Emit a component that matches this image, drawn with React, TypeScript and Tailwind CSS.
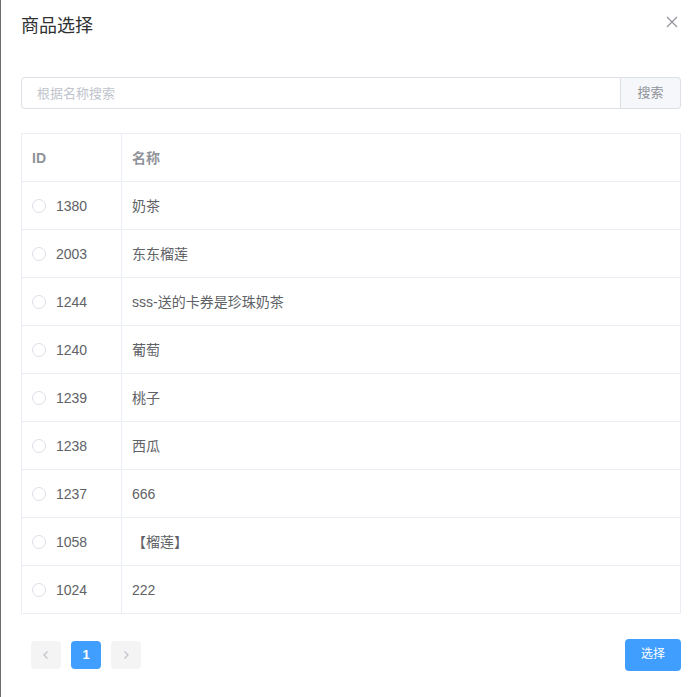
import { useState } from "react";

const goods = [
  { id: 1380, name: "奶茶" },
  { id: 2003, name: "东东榴莲" },
  { id: 1244, name: "sss-送的卡券是珍珠奶茶" },
  { id: 1240, name: "葡萄" },
  { id: 1239, name: "桃子" },
  { id: 1238, name: "西瓜" },
  { id: 1237, name: "666" },
  { id: 1058, name: "【榴莲】" },
  { id: 1024, name: "222" },
];

export default function App() {
  const [picked, setPicked] = useState<number | null>(null);

  return (
    <div
      className="w-[697px] h-[697px] bg-white border-l border-[#6b6b6b] text-[#606266] text-sm overflow-hidden"
      style={{ fontFamily: '"Helvetica Neue", "Liberation Sans", "Noto Sans CJK SC", sans-serif' }}
    >
      <div className="pl-[20px] pr-[18px] pt-[14px] flex items-start justify-between">
        <h1 className="text-[18px] leading-6 text-[#303133]">商品选择</h1>
        <button className="mt-[1px] text-[#909399]">
          <svg width="14" height="14" viewBox="0 0 14 14" fill="none" stroke="currentColor" strokeWidth="1.2">
            <path d="M2 2L12 12M12 2L2 12" />
          </svg>
        </button>
      </div>

      <div className="pl-[20px] pt-[39px] w-[680px]">
        <div className="flex h-8 w-[660px]">
          <input
            className="flex-1 h-8 border border-[#dcdfe6] rounded-l px-[15px] text-[13px] outline-none placeholder:text-[#c0c4cc]"
            placeholder="根据名称搜索"
          />
          <button className="w-[60px] h-8 bg-[#f5f7fa] border border-l-0 border-[#dcdfe6] rounded-r text-[13px] text-[#909399]">
            搜索
          </button>
        </div>

        <table className="mt-[24px] w-[660px] border border-[#ebeef5] border-collapse">
          <thead>
            <tr className="h-[48px] text-left text-[#909399]">
              <th className="w-[100px] border border-[#ebeef5] px-[10px] font-bold">ID</th>
              <th className="border border-[#ebeef5] px-[10px] font-bold">名称</th>
            </tr>
          </thead>
          <tbody>
            {goods.map((g) => (
              <tr key={g.id} className="h-[48px]">
                <td className="border border-[#ebeef5] px-[10px]">
                  <label className="flex items-center gap-[10px] cursor-pointer" onClick={() => setPicked(g.id)}>
                    <span
                      className={
                        picked === g.id
                          ? "w-[14px] h-[14px] rounded-full border-4 border-[#409eff] bg-white"
                          : "w-[14px] h-[14px] rounded-full border border-[#dcdfe6] bg-white"
                      }
                    />
                    <span>{g.id}</span>
                  </label>
                </td>
                <td className="border border-[#ebeef5] px-[10px]">{g.name}</td>
              </tr>
            ))}
          </tbody>
        </table>

        <div className="mt-[25px] w-[660px] flex items-center justify-between">
          <div className="flex items-center gap-[10px] pl-[10px]">
            <button className="w-[30px] h-[28px] rounded-sm bg-[#f4f4f5] text-[#c0c4cc] flex items-center justify-center">
              <svg width="10" height="10" viewBox="0 0 10 10" fill="none" stroke="currentColor" strokeWidth="1.3">
                <path d="M6.5 1.5L3 5l3.5 3.5" />
              </svg>
            </button>
            <button className="w-[30px] h-[28px] rounded-sm bg-[#409eff] text-white text-[13px] font-bold">1</button>
            <button className="w-[30px] h-[28px] rounded-sm bg-[#f4f4f5] text-[#c0c4cc] flex items-center justify-center">
              <svg width="10" height="10" viewBox="0 0 10 10" fill="none" stroke="currentColor" strokeWidth="1.3">
                <path d="M3.5 1.5L7 5 3.5 8.5" />
              </svg>
            </button>
          </div>
          <button className="w-[56px] h-8 rounded bg-[#409eff] text-white text-[12px]">选择</button>
        </div>
      </div>
    </div>
  );
}
